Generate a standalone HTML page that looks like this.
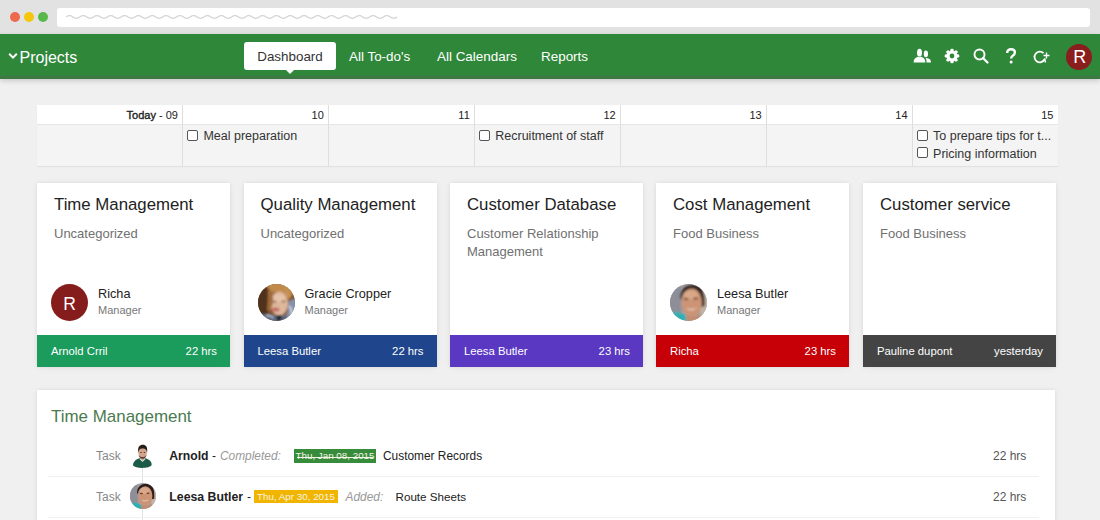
<!DOCTYPE html>
<html><head><meta charset="utf-8">
<style>
*{box-sizing:border-box;margin:0;padding:0}
html,body{width:1100px;height:520px;overflow:hidden}
body{background:#f0f0f0;font-family:"Liberation Sans",sans-serif;position:relative;color:#333}
.abs{position:absolute}
#chrome{left:0;top:0;width:1100px;height:34px;background:#e2e2e2}
.dot{width:10px;height:10px;border-radius:50%;top:12px}
#url{left:57px;top:8px;width:1033px;height:19px;background:#fff;border-radius:3px}
#hdr{left:0;top:34px;width:1100px;height:45px;background:linear-gradient(to bottom,#2f883a 0,#2f883a 40.5px,#3b7a42 42.5px,#3e7444 45px);box-shadow:0 2px 5px rgba(0,0,0,.16)}
#proj{left:19.5px;top:47.5px;font-size:16px;color:#fff;line-height:20px}
.nav{top:48.5px;font-size:13.45px;color:#fff;line-height:16px;white-space:nowrap}
#dash{left:244px;top:42px;width:92px;height:28px;background:#fff;border-radius:3px;color:#333;font-size:13.4px;line-height:29px;text-align:center}
#dash:after{content:"";position:absolute;left:42px;top:28px;border-left:4px solid transparent;border-right:4px solid transparent;border-top:4px solid #fff}
#cal{left:36.5px;top:105px;width:1021.5px;height:61px;background:#f4f4f4;box-shadow:0 1px 1px rgba(0,0,0,.06)}
#calh{left:0;top:0;width:1021.5px;height:20px;background:#fff;border-bottom:1px solid #e6e6e6}
.col{top:0;height:61px;border-left:1px solid #dedede}
.cd{top:0;height:20px;font-size:11px;line-height:20px;color:#222;text-align:right;padding-right:4.5px}
.chk{width:11px;height:11px;border:1px solid #555;border-radius:2px;background:#fff}
.ct{font-size:12.5px;color:#333;line-height:14px;white-space:nowrap}
.card{top:183px;width:193px;height:184px;background:#fff;box-shadow:0 0 3px rgba(0,0,0,.08),0 1px 8px rgba(0,0,0,.045)}
.ttl{left:17px;top:12px;font-size:16.8px;color:#222;line-height:20px;white-space:nowrap}
.sub{left:17px;top:42px;font-size:13px;color:#707070;line-height:18px;white-space:nowrap}
.av{left:14px;top:101px;width:37px;height:37px;border-radius:50%;overflow:hidden}
.nm{left:61px;top:103.5px;font-size:12.7px;color:#222;line-height:14px;white-space:nowrap}
.role{left:61px;top:121px;font-size:11px;color:#777;line-height:13px}
.ft{left:0;top:152px;width:193px;height:32px;color:#fff;font-size:11.3px;line-height:32px}
.ft .l{position:absolute;left:14px;top:0}
.ft .r{position:absolute;right:13px;top:0}
#panel{left:37px;top:390px;width:1018px;height:140px;background:#fff;box-shadow:0 0 3px rgba(0,0,0,.08),0 1px 8px rgba(0,0,0,.045)}
.task{left:59px;font-size:12px;color:#888;line-height:14px}
.rt{font-size:12px;color:#222;line-height:14px;white-space:nowrap}
.it{font-style:italic;color:#999;font-size:11.9px}
.badge{height:13.8px;color:#f4f4e4;font-size:9.8px;line-height:14.6px;text-align:center;white-space:nowrap}
.strike:after{content:"";position:absolute;left:3px;right:3px;top:8.2px;height:1.1px;background:#f4f4e4}
.hrs{left:956px;font-size:12px;color:#555;line-height:14px}
</style></head><body>
<div id="chrome" class="abs"></div>
<div class="abs dot" style="left:10px;background:#ee6a4d"></div>
<div class="abs dot" style="left:24px;background:#f6c60d"></div>
<div class="abs dot" style="left:38px;background:#58b94a"></div>
<div id="url" class="abs"></div>
<svg class="abs" style="left:66px;top:14px" width="334" height="6" viewBox="0 0 334 6"><path d="M0 3 q 3.45 -2.6 6.9 0 t 6.9 0 q 3.45 -2.6 6.9 0 t 6.9 0 q 3.45 -2.6 6.9 0 t 6.9 0 q 3.45 -2.6 6.9 0 t 6.9 0 q 3.45 -2.6 6.9 0 t 6.9 0 q 3.45 -2.6 6.9 0 t 6.9 0 q 3.45 -2.6 6.9 0 t 6.9 0 q 3.45 -2.6 6.9 0 t 6.9 0 q 3.45 -2.6 6.9 0 t 6.9 0 q 3.45 -2.6 6.9 0 t 6.9 0 q 3.45 -2.6 6.9 0 t 6.9 0 q 3.45 -2.6 6.9 0 t 6.9 0 q 3.45 -2.6 6.9 0 t 6.9 0 q 3.45 -2.6 6.9 0 t 6.9 0 q 3.45 -2.6 6.9 0 t 6.9 0 q 3.45 -2.6 6.9 0 t 6.9 0 q 3.45 -2.6 6.9 0 t 6.9 0 q 3.45 -2.6 6.9 0 t 6.9 0 q 3.45 -2.6 6.9 0 t 6.9 0 q 3.45 -2.6 6.9 0 t 6.9 0 q 3.45 -2.6 6.9 0 t 6.9 0 q 3.45 -2.6 6.9 0 t 6.9 0 q 3.45 -2.6 6.9 0 t 6.9 0 q 3.45 -2.6 6.9 0 t 6.9 0" fill="none" stroke="#d4d4d4" stroke-width="1.3"/></svg>
<div id="hdr" class="abs"></div>
<svg class="abs" style="left:7.5px;top:52px" width="10" height="8" viewBox="0 0 10 8"><path d="M1.2 1.8 L5 5.6 L8.8 1.8" fill="none" stroke="#fff" stroke-width="2"/></svg>
<div id="proj" class="abs">Projects</div>
<div id="dash" class="abs">Dashboard</div>
<div class="abs nav" style="left:349px">All To-do's</div>
<div class="abs nav" style="left:437px">All Calendars</div>
<div class="abs nav" style="left:541px">Reports</div>

<svg class="abs" style="left:912px;top:48px" width="20" height="16" viewBox="0 0 20 16">
 <g fill="#fff">
  <ellipse cx="7.5" cy="4.7" rx="2.5" ry="3.9"/>
  <path d="M1.6 14.4 C1.6 11 3.5 9.4 6 8.8 L7.5 9.3 L9 8.8 C11.5 9.4 13.4 11 13.4 14.4 Z"/>
  <ellipse cx="13.9" cy="5.9" rx="2.1" ry="3.3"/>
  <path d="M14.6 9.9 C17.5 10.3 19 11.6 19 14.4 L14.6 14.4 C14.6 12.5 14.2 11.2 13.6 10.3 Z"/>
 </g>
</svg>
<svg class="abs" style="left:944px;top:48px" width="16" height="16" viewBox="0 0 16 16">
 <g fill="#fff" transform="translate(8 8)">
  <circle r="5.2"/>
  <rect x="-1.7" y="-7.3" width="3.4" height="14.6" rx="1.4"/>
  <rect x="-1.7" y="-7.3" width="3.4" height="14.6" rx="1.4" transform="rotate(45)"/>
  <rect x="-1.7" y="-7.3" width="3.4" height="14.6" rx="1.4" transform="rotate(90)"/>
  <rect x="-1.7" y="-7.3" width="3.4" height="14.6" rx="1.4" transform="rotate(135)"/>
 </g>
 <circle cx="8" cy="8" r="2.4" fill="#2f883a"/>
</svg>
<svg class="abs" style="left:972px;top:48px" width="18" height="16" viewBox="0 0 18 16">
 <circle cx="7.5" cy="6.5" r="5" fill="none" stroke="#fff" stroke-width="1.9"/>
 <path d="M11 10 L15.5 14.5" stroke="#fff" stroke-width="2.2" stroke-linecap="round"/>
</svg>
<svg class="abs" style="left:1005px;top:48px" width="12" height="16" viewBox="0 0 12 16"><path d="M2.2 5 C2.2 2.3 3.8 1.2 6 1.2 C8.4 1.2 9.9 2.6 9.9 4.6 C9.9 6.4 8.8 7.2 7.5 8 C6.5 8.6 6.2 9.2 6.2 10.6" fill="none" stroke="#fff" stroke-width="2.4"/><circle cx="6.1" cy="13.9" r="1.5" fill="#fff"/></svg>
<svg class="abs" style="left:1033px;top:48.5px" width="20" height="16" viewBox="0 0 20 16">
 <path d="M10.5 4.2 A5.3 5.3 0 1 0 11.5 10.5" fill="none" stroke="#fff" stroke-width="1.8"/>
 <path d="M9.5 12.5 L11.8 10 L12.5 13.5" fill="none" stroke="#fff" stroke-width="1.4"/>
 <path d="M10.5 6.5 H16.5 M13.5 3.5 V9.5" stroke="#fff" stroke-width="1.4"/>
</svg>
<div class="abs" style="left:1066px;top:44px;width:26px;height:26px;border-radius:50%;background:#8a1d1d;color:#fff;font-size:18px;line-height:27.5px;text-align:center;text-indent:1.5px">R</div>


<div id="cal" class="abs">
  <div id="calh" class="abs"></div>
<div class="abs cd" style="left:0.0px;width:145.93px"><span style="-webkit-text-stroke:0.35px #222">Today</span> - 09</div>
<div class="abs col" style="left:145.93px"></div>
<div class="abs cd" style="left:145.93px;width:145.93px">10</div>
<div class="abs col" style="left:291.86px"></div>
<div class="abs cd" style="left:291.86px;width:145.93px">11</div>
<div class="abs col" style="left:437.79px"></div>
<div class="abs cd" style="left:437.79px;width:145.93px">12</div>
<div class="abs col" style="left:583.71px"></div>
<div class="abs cd" style="left:583.71px;width:145.93px">13</div>
<div class="abs col" style="left:729.64px"></div>
<div class="abs cd" style="left:729.64px;width:145.93px">14</div>
<div class="abs col" style="left:875.57px"></div>
<div class="abs cd" style="left:875.57px;width:145.93px">15</div>
<div class="abs chk" style="left:150.93px;top:25px"></div><div class="abs ct" style="left:166.93px;top:23.5px">Meal preparation</div>
<div class="abs chk" style="left:442.79px;top:25px"></div><div class="abs ct" style="left:458.79px;top:23.5px">Recruitment of staff</div>
<div class="abs chk" style="left:880.57px;top:25px"></div><div class="abs ct" style="left:896.57px;top:23.5px">To prepare tips for t...</div>
<div class="abs chk" style="left:880.57px;top:42px"></div><div class="abs ct" style="left:896.57px;top:42px">Pricing information</div>
</div>

<div class="abs card" style="left:37px">
  <div class="abs ttl">Time Management</div>
  <div class="abs sub">Uncategorized</div>
  <div class="abs av"><div style="width:37px;height:37px;background:#861d1d;color:#fff;font-size:17.5px;line-height:40px;text-align:center">R</div></div>
  <div class="abs nm">Richa</div>
  <div class="abs role">Manager</div>
  <div class="abs ft" style="background:#1b9b5c"><span class="l">Arnold Crril</span><span class="r">22 hrs</span></div>
</div>
<div class="abs card" style="left:243.5px">
  <div class="abs ttl">Quality Management</div>
  <div class="abs sub">Uncategorized</div>
  <div class="abs av"><svg width="37" height="37" viewBox="0 0 37 37"><defs><filter id="bl1" x="-20%" y="-20%" width="140%" height="140%"><feGaussianBlur stdDeviation="0.8"/></filter></defs>
<rect width="37" height="37" fill="#7e5230"/>
<g filter="url(#bl1)">
<path d="M-2 4 C3 1 8 2 11 6 C10 14 9 22 10 30 L-2 30 Z" fill="#4f321d"/>
<path d="M8 -2 H34 C37 6 35 12 31 15 C27 7 18 6 13 10 C11 6 10 3 8 -2 Z" fill="#c08a4c"/>
<ellipse cx="21.2" cy="19.5" rx="9" ry="12" fill="#dfb79c"/>
<ellipse cx="21" cy="14" rx="6" ry="3.5" fill="#e6c4aa"/>
<path d="M10 6 C13 4 15 8 15 14 C15 19 14 23 12 27 L9 26 C10 20 10 12 10 6 Z" fill="#a06a3a"/>
<path d="M28 4 C31 8 32 12 30 16 L28 15 C28 11 28 8 27 5 Z" fill="#c79558"/>
<path d="M30.5 17 L38 14 V38 H25 C29 30 31 24 30.5 17 Z" fill="#8593ae"/>
<path d="M31 22 C33 24 34 27 33 30" stroke="#e6ebf3" stroke-width="1.4" fill="none"/>
<path d="M3 31 C8 29 15 30 19 32 L26 31 L33 35 V39 H0 Z" fill="#5d6a84"/>
<path d="M8 32 C11 31 14 32 15 34" stroke="#dfe6f0" stroke-width="1.2" fill="none"/>
<path d="M18 31 L24 31 L23 37 L19 37 Z" fill="#2a2c36"/>
<ellipse cx="17.5" cy="25.5" rx="4" ry="2" fill="#c46c66"/>
<ellipse cx="16.5" cy="17.8" rx="2.2" ry="1" fill="#8f6a5c"/>
<ellipse cx="25.5" cy="17.4" rx="2.2" ry="1" fill="#8f6a5c"/>
</g></svg></div>
  <div class="abs nm">Gracie Cropper</div>
  <div class="abs role">Manager</div>
  <div class="abs ft" style="background:#1f468c"><span class="l">Leesa Butler</span><span class="r">22 hrs</span></div>
</div>
<div class="abs card" style="left:450px">
  <div class="abs ttl">Customer Database</div>
  <div class="abs sub">Customer Relationship<br>Management</div>
  <div class="abs ft" style="background:#5a38c2"><span class="l">Leesa Butler</span><span class="r">23 hrs</span></div>
</div>
<div class="abs card" style="left:656px">
  <div class="abs ttl">Cost Management</div>
  <div class="abs sub">Food Business</div>
  <div class="abs av"><svg width="37" height="37" viewBox="0 0 37 37"><defs><filter id="bl2" x="-20%" y="-20%" width="140%" height="140%"><feGaussianBlur stdDeviation="0.8"/></filter></defs>
<rect width="37" height="37" fill="#a09ea2"/>
<g filter="url(#bl2)">
<rect x="-2" y="-2" width="13" height="41" fill="#8e8e98"/>
<path d="M31 6 H39 V39 H30 Z" fill="#c2b3a5"/>
<path d="M10 14 C10 3 20 -1 28 2 C34 5 35 12 34.5 22 L31.5 23 C31 13 27 6 21 6 C15 6 12 9 11.5 16 Z" fill="#2a1f1a"/>
<ellipse cx="21.7" cy="18.5" rx="10.2" ry="14" fill="#cc9474"/>
<ellipse cx="21" cy="11" rx="7" ry="4.5" fill="#d9a888"/>
<path d="M16.5 23.5 C19 25.8 24 25.8 26.5 23.2 C25.5 26.8 17.5 27 16.5 23.5 Z" fill="#f6ece6"/>
<ellipse cx="16.2" cy="15" rx="2.3" ry="1" fill="#6a4232"/>
<ellipse cx="25.5" cy="14.5" rx="2.3" ry="1" fill="#6a4232"/>
<path d="M-2 29 C4 27 12 28 16 32 L17 39 H-2 Z" fill="#2fb1b3"/>
<path d="M16 31 C19 33 26 33.5 31 30 L33 39 H16 Z" fill="#c28c6e"/>
</g></svg></div>
  <div class="abs nm">Leesa Butler</div>
  <div class="abs role">Manager</div>
  <div class="abs ft" style="background:#c60006"><span class="l">Richa</span><span class="r">23 hrs</span></div>
</div>
<div class="abs card" style="left:863px">
  <div class="abs ttl">Customer service</div>
  <div class="abs sub">Food Business</div>
  <div class="abs ft" style="background:#444444"><span class="l">Pauline dupont</span><span class="r">yesterday</span></div>
</div>
<div id="panel" class="abs">
  <div class="abs" style="left:14px;top:16.5px;font-size:16.95px;color:#4b7a50;line-height:20px;white-space:nowrap">Time Management</div>
  <div class="abs" style="left:104.8px;top:77px;width:1.2px;height:60px;background:#e2e2e2"></div>
  <div class="abs" style="left:11px;top:86px;width:991px;height:1px;background:#f1f1f1"></div>
  <div class="abs" style="left:11px;top:127px;width:991px;height:1px;background:#f1f1f1"></div>
  <div class="abs task" style="top:59px">Task</div>
  <div class="abs" style="left:95.5px;top:54px"><svg width="20" height="25" viewBox="0 0 20 25">
<path d="M0 21.5 C0 17 4 14.2 9.5 13.8 C15 14.2 19 17 18.6 21 C17 24.5 3 25 0 21.5 Z" fill="#1c5b48"/>
<path d="M7.3 12 L11.7 12 L11.7 15 L9.5 16.8 L7.3 15 Z" fill="#c99a80"/>
<path d="M7 14 L9.5 16.6 L12 14 L12.3 15.2 L9.5 18 L6.7 15.2Z" fill="#dfe3df"/>
<ellipse cx="9.6" cy="9" rx="4.1" ry="5.3" fill="#d3a48b"/>
<path d="M5.3 9.5 C4.3 2.5 6.8 0.8 9.8 0.8 C12.8 0.8 15 2.5 14 9.5 C13.6 5.5 12.3 4.6 9.7 4.6 C7.1 4.6 5.8 5.5 5.3 9.5 Z" fill="#271d18"/>
<path d="M5.7 10.5 C6 13.8 8 14.8 9.6 14.8 C11.2 14.8 13.2 13.8 13.5 10.5 C12.8 12.4 11.5 13 9.6 13 C7.7 13 6.4 12.4 5.7 10.5 Z" fill="#5a3e32"/>
<ellipse cx="8" cy="8.6" rx="0.8" ry="0.5" fill="#4a2e24"/><ellipse cx="11.4" cy="8.6" rx="0.8" ry="0.5" fill="#4a2e24"/>
</svg></div>
  <div class="abs rt" style="left:132.3px;top:58.5px;font-weight:bold;font-size:12.2px">Arnold</div>
  <div class="abs rt" style="left:175px;top:58.5px">-</div>
  <div class="abs rt it" style="left:183px;top:58.5px">Completed:</div>
  <div class="abs badge strike" style="left:257px;top:59.2px;width:82px;background:#368c3a">Thu, Jan 08, 2015</div>
  <div class="abs rt" style="left:346px;top:58.5px;font-size:11.9px">Customer Records</div>
  <div class="abs hrs" style="top:59px">22 hrs</div>
  <div class="abs task" style="top:100px">Task</div>
  <div class="abs" style="left:93px;top:93px;width:26px;height:26px;border-radius:50%;overflow:hidden"><svg width="26" height="26" viewBox="0 0 37 37"><defs><filter id="bl3" x="-20%" y="-20%" width="140%" height="140%"><feGaussianBlur stdDeviation="0.8"/></filter></defs>
<rect width="37" height="37" fill="#a09ea2"/>
<g filter="url(#bl3)">
<rect x="-2" y="-2" width="13" height="41" fill="#8e8e98"/>
<path d="M31 6 H39 V39 H30 Z" fill="#c2b3a5"/>
<path d="M10 14 C10 3 20 -1 28 2 C34 5 35 12 34.5 22 L31.5 23 C31 13 27 6 21 6 C15 6 12 9 11.5 16 Z" fill="#2a1f1a"/>
<ellipse cx="21.7" cy="18.5" rx="10.2" ry="14" fill="#cc9474"/>
<ellipse cx="21" cy="11" rx="7" ry="4.5" fill="#d9a888"/>
<path d="M16.5 23.5 C19 25.8 24 25.8 26.5 23.2 C25.5 26.8 17.5 27 16.5 23.5 Z" fill="#f6ece6"/>
<ellipse cx="16.2" cy="15" rx="2.3" ry="1" fill="#6a4232"/>
<ellipse cx="25.5" cy="14.5" rx="2.3" ry="1" fill="#6a4232"/>
<path d="M-2 29 C4 27 12 28 16 32 L17 39 H-2 Z" fill="#2fb1b3"/>
<path d="M16 31 C19 33 26 33.5 31 30 L33 39 H16 Z" fill="#c28c6e"/>
</g></svg></div>
  <div class="abs rt" style="left:132.3px;top:99.5px;font-weight:bold;font-size:12.3px">Leesa Butler</div>
  <div class="abs rt" style="left:210px;top:99.5px">-</div>
  <div class="abs badge" style="left:217.3px;top:99.5px;width:83.4px;background:#f1b500">Thu, Apr 30, 2015</div>
  <div class="abs rt it" style="left:308.5px;top:99.5px">Added:</div>
  <div class="abs rt" style="left:358.5px;top:99.5px;font-size:11.65px">Route Sheets</div>
  <div class="abs hrs" style="top:100px">22 hrs</div>
</div>
</body></html>
